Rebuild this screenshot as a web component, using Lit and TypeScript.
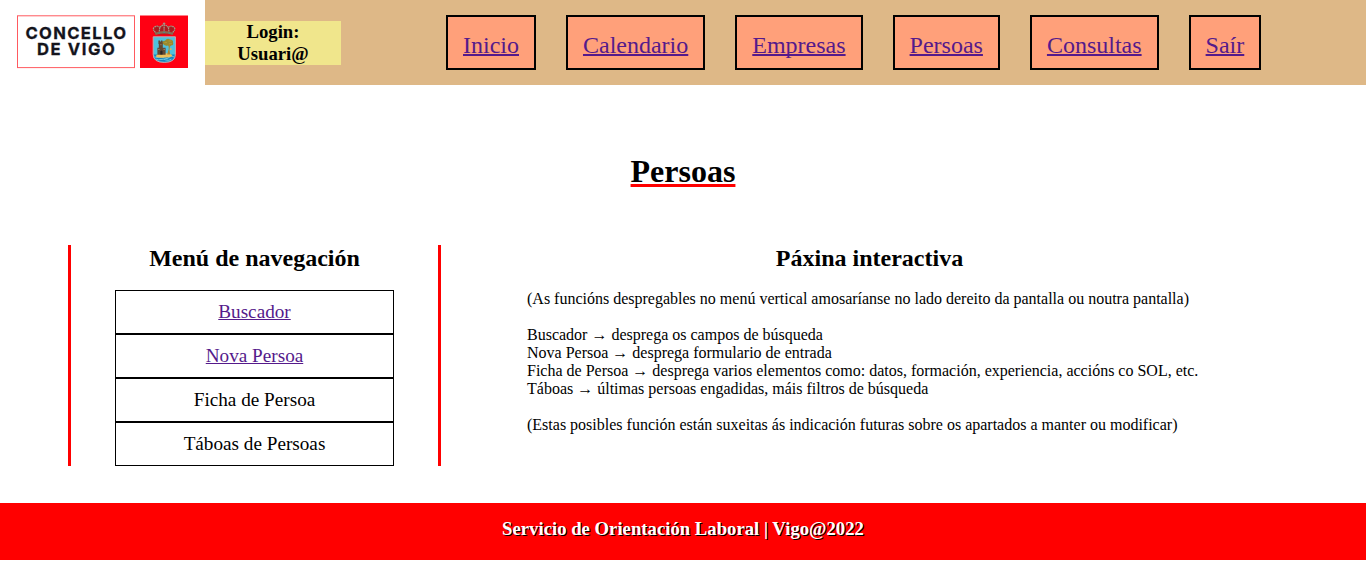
import { LitElement, html, css, svg } from "lit";
import { customElement, state } from "lit/decorators.js";

@customElement("vigo-logo")
class VigoLogo extends LitElement {
  static styles = css`
    :host { display: block; width: 205px; height: 85px; background: #fff; }
    svg { display: block; }
    .word { font-family: Inter, "Liberation Sans", sans-serif; font-weight: 700; font-size: 16.6px; fill: #14141c; stroke: #14141c; stroke-width: .3px; }
  `;
  render() {
    return html`<svg width="205" height="85" viewBox="0 0 205 85" role="img">
      <rect x="17.5" y="15.8" width="117" height="51.8" fill="#fff" stroke="#ff5a60"></rect>
      <text class="word" x="25.5" y="39" textLength="100.5" lengthAdjust="spacing">CONCELLO</text>
      <text class="word" x="36.9" y="55.2" textLength="78" lengthAdjust="spacing">DE VIGO</text>
      <rect x="140" y="15.5" width="48" height="52.5" fill="#ff0013"></rect>
      ${svg`
        <g>
          <path d="M155.2 34.5 Q151.8 29 154 27.2 Q157 24.6 160 26.6 Q162.2 24.4 164 24.4 Q165.8 24.4 168 26.6 Q171 24.6 174.4 27.2 Q176.4 29 173 34.5 Z" fill="#a81c20"/>
          <path d="M155.6 32.5 Q152 29 154.2 27.3 Q157.2 25 159.8 27.4 L159.2 32 M172.6 32.5 Q176.2 29 174 27.3 Q171 25 168.4 27.4 L169 32 M160 27.4 Q164 22.6 168.2 27.4 M164.1 25 V32" fill="none" stroke="#a89a88" stroke-width="1.2" stroke-dasharray="1.6 .5"/>
          <path d="M155.2 33.8 Q164 30.8 173 33.8" fill="none" stroke="#8b6a50" stroke-width="2.4"/>
          <path d="M158.5 33 H160 M163.3 32.4 H165 M168.5 33 H170" stroke="#38969a" stroke-width="1"/>
          <path d="M164.1 22.4 V25.2 M162.9 23.5 H165.3" stroke="#a49485" stroke-width="1"/>
          <path d="M153.2 36.8 H175.4 V54.5 Q175.4 62.4 164.3 62.4 Q153.2 62.4 153.2 54.5 Z" fill="#50c1dc" stroke="#c9a7ac" stroke-width="1"/>
          <path d="M154 54.5 H174.8 Q174.6 61.8 164.3 61.8 Q154.2 61.8 154 54.5 Z" fill="#1783bd"/>
          <path d="M154.5 56.8 Q157 58 159.5 57.2 T164.5 58 T169.5 57.2 T174 57 M156 59.2 Q158.5 60.2 161 59.5 T166 60 T171.5 59" fill="none" stroke="#76cce2" stroke-width=".9"/>
          <path d="M155.8 56.4 Q157 53 164 53.4 Q171.5 53 172.4 56.2 Q168 58 164 57.4 Q159 58.4 155.8 56.4 Z" fill="#edc05b"/>
          <path d="M157.4 54.7 V47.7 H158.8 V44 H158.4 V40.6 H160 V41.6 H161 V40.6 H162.4 V41.6 H163.4 V44 H162.8 V47.7 H165.6 V54.7 Z" fill="#624834"/>
          <path d="M160.3 54.5 V51.3 Q161.4 49.6 162.5 51.3 V54.5 Z" fill="#2b2523"/>
          <path d="M158 49.4 H159.7 M163.4 49.4 H165 M160.3 44.7 H161.6" stroke="#ae9168" stroke-width=".8"/>
          <path d="M162.7 43.6 Q162 40.8 165 40.7 Q167 37.7 170 39.4 Q173.6 39.7 173 42.6 Q174 45.5 171 45.6 Q169.8 47.6 168 45.5 Q164.2 46.4 162.7 43.6 Z" fill="#9a8a2e"/>
          <path d="M168.6 44 Q169.5 49 167.2 54.5 H170.2 Q168.8 49.8 170.2 44.5 Z" fill="#ae852d"/>
          <path d="M164.5 42.5 H167 M168.5 41 H171.5 M169 43.7 H172" stroke="#b79c38" stroke-width=".8"/>
          <path d="M170.8 48.2 V50" stroke="#d4b85b" stroke-width="1.6"/>
        </g>`}
    </svg>`;
  }
}

@customElement("app-root")
class AppRoot extends LitElement {
  @state() nav = ["Inicio", "Calendario", "Empresas", "Persoas", "Consultas", "Saír"];
  @state() menu = [
    { label: "Buscador", link: true },
    { label: "Nova Persoa", link: true },
    { label: "Ficha de Persoa", link: false },
    { label: "Táboas de Persoas", link: false },
  ];

  static styles = css`
    :host { display: block; height: 568px; overflow: hidden; background: #fff; color: #000; font-family: "Liberation Serif", "Times New Roman", serif; }
    * { box-sizing: border-box; }
    h1, h2, h3, p, ul { margin: 0; padding: 0; }
    a { color: #551a8b; text-decoration: underline; cursor: pointer; }
    header { display: flex; align-items: center; height: 85px; background: burlywood; }
    .login { width: 136px; height: 44px; background: khaki; font-size: 18.72px; line-height: 22px; text-align: center; }
    .nav { display: flex; gap: 30px; margin-left: 105px; list-style: none; }
    .nav li { height: 55px; padding: 15px 15px 0; border: 2px solid #000; background: lightsalmon; font-size: 24px; line-height: 27px; }
    .nav a { text-decoration-thickness: 2px; text-decoration-skip-ink: none; }
    h1 { margin-top: 68px; height: 37px; line-height: 37px; font-size: 32px; text-align: center; text-decoration: underline 3px red; }
    main { display: flex; margin: 55px 0 0 68px; height: 221px; }
    .side { width: 373px; padding: 0 44px; border: solid red; border-width: 0 3px; }
    h2 { height: 45px; line-height: 27px; font-size: 24px; text-align: center; }
    .menu { list-style: none; }
    .menu li { height: 44px; border: 1px solid #000; font-size: 19.2px; line-height: 42px; text-align: center; }
    .content { width: 685px; margin-left: 86px; }
    .content p { white-space: pre-line; font-size: 16px; line-height: 18px; }
    footer { height: 57px; margin-top: 37px; padding-top: 15px; background: red; color: #fff; text-align: center; font-size: 18.72px; line-height: 22px; text-shadow: 1px 1px #000; }
    footer h3 { font-size: inherit; }
  `;

  render() {
    return html`
      <header>
        <vigo-logo></vigo-logo>
        <h3 class="login">Login:<br />Usuari@</h3>
        <ul class="nav">${this.nav.map((n) => html`<li><a>${n}</a></li>`)}</ul>
      </header>
      <h1>Persoas</h1>
      <main>
        <section class="side">
          <h2>Menú de navegación</h2>
          <ul class="menu">${this.menu.map((m) => html`<li>${m.link ? html`<a>${m.label}</a>` : m.label}</li>`)}</ul>
        </section>
        <section class="content">
          <h2>Páxina interactiva</h2>
          <p>(As funcións despregables no menú vertical amosaríanse no lado dereito da pantalla ou noutra pantalla)

Buscador → desprega os campos de búsqueda
Nova Persoa → desprega formulario de entrada
Ficha de Persoa → desprega varios elementos como: datos, formación, experiencia, accións co SOL, etc.
Táboas → últimas persoas engadidas, máis filtros de búsqueda

(Estas posibles función están suxeitas ás indicación futuras sobre os apartados a manter ou modificar)</p>
        </section>
      </main>
      <footer><h3>Servicio de Orientación Laboral | Vigo@2022</h3></footer>
    `;
  }
}
